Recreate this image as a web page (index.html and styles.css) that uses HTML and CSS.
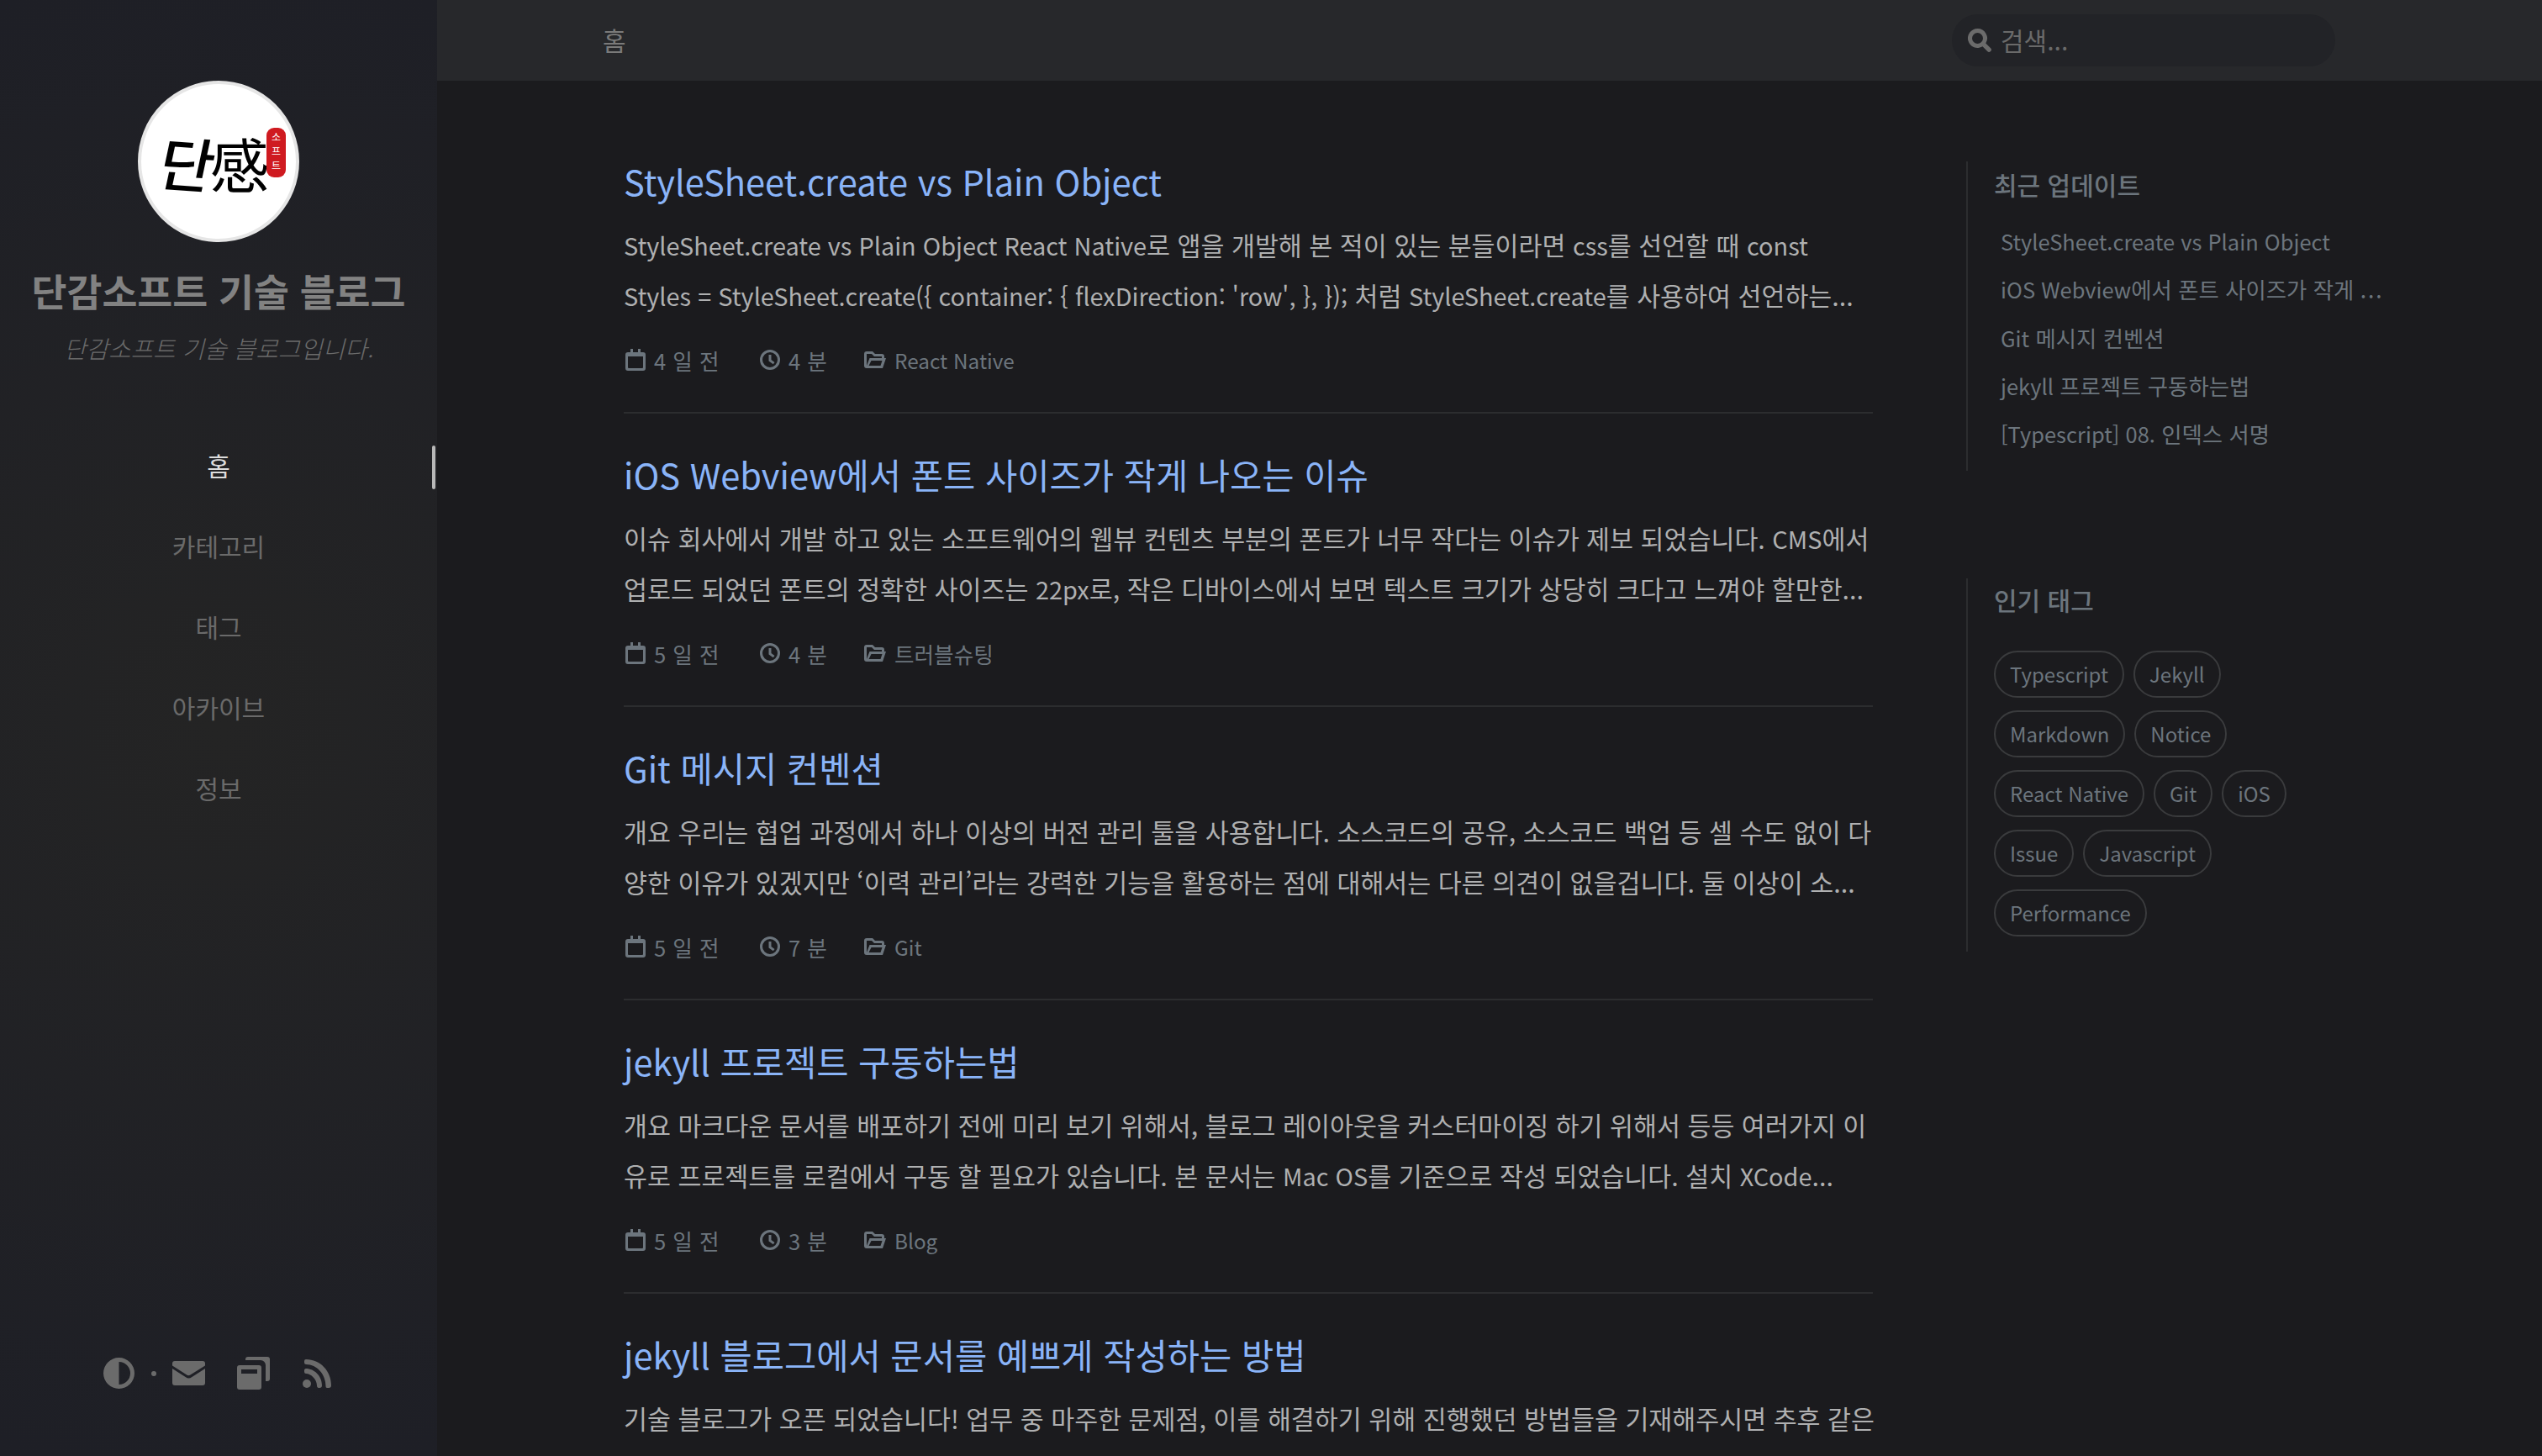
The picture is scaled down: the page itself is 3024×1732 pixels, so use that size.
FILE: index.html
```html
<!DOCTYPE html>
<html lang="ko">
<head>
    <meta charset="UTF-8">
    <title>단감소프트 기술 블로그</title>
    <link rel="stylesheet" href="styles.css">
</head>
<body>
    <aside class="sidebar">
        <div class="avatar">
            <svg class="logo" viewBox="0 0 184 184">
                <text class="logo-dan" transform="translate(17 120) rotate(4) skewX(-8)">단</text>
                <text class="logo-gam" transform="translate(82 124)">感</text>
                <rect class="logo-seal" x="149" y="52" width="23" height="59" rx="9"/>
                <text class="logo-seal-text" x="160.500" y="68">소</text>
                <text class="logo-seal-text" x="160.500" y="85">프</text>
                <text class="logo-seal-text" x="160.500" y="102">트</text>
            </svg>
        </div>
        <div class="site-title">단감소프트 기술 블로그</div>
        <div class="site-subtitle">단감소프트 기술 블로그입니다.</div>
        <nav class="nav">
            <a class="nav-item active">홈</a>
            <a class="nav-item">카테고리</a>
            <a class="nav-item">태그</a>
            <a class="nav-item">아카이브</a>
            <a class="nav-item">정보</a>
        </nav>
        <div class="sidebar-bottom">
            <svg class="side-icon icon-mode" viewBox="0 0 37 37"><path fill-rule="evenodd" d="M18.500 0a18.500 18.500 0 1 0 0 37a18.500 18.500 0 1 0 0-37zM18.500 5a13.500 13.500 0 0 1 0 27z"/></svg>
            <span class="side-dot"></span>
            <svg class="side-icon icon-mail" viewBox="0 0 39 29"><path d="M3 0h33a3 3 0 0 1 3 3v2.500L21 16.800a3.400 3.400 0 0 1-3.400 0L0 5.500V3a3 3 0 0 1 3-3z"/><path d="M0 9l16 10.300a6 6 0 0 0 7 0L39 9v17a3 3 0 0 1-3 3H3a3 3 0 0 1-3-3z"/></svg>
            <svg class="side-icon icon-books" viewBox="0 0 39 39"><path d="M13 0h23a3 3 0 0 1 3 3v23a3 3 0 0 1-3 3h-2V10a6 6 0 0 0-6-6H10V3a3 3 0 0 1 3-3z"/><path fill-rule="evenodd" d="M3 10h23a3 3 0 0 1 3 3v23a3 3 0 0 1-3 3H3a3 3 0 0 1-3-3V13a3 3 0 0 1 3-3zM5 15v5h19v-5z"/></svg>
            <svg class="side-icon icon-rss" viewBox="0 0 34 34"><circle cx="5" cy="29" r="5"/><path d="M2 12.500a2 2 0 0 1 2-1.500c10 0 19 9 19 20a3 3 0 0 1-3 3h-1c-1 0-2-1-2-2.500C17 24 10 17 4 17a2 2 0 0 1-2-2z"/><path d="M2 2a2 2 0 0 1 2-2c17 0 30 14 30 31a3 3 0 0 1-3 3h-2c-1 0-1.500-1-1.500-2C27.500 18 17 6 4 6a2 2 0 0 1-2-2z"/></svg>
        </div>
        <span class="nav-bar"></span>
    </aside>

    <div class="page">
        <header class="topbar">
            <div class="breadcrumb">홈</div>
            <div class="search">
                <svg class="search-icon" viewBox="0 0 28 28"><path d="M11.500 0a11.500 11.500 0 0 1 9.800 17.500l6 6a2.700 2.700 0 0 1-3.800 3.800l-6-6A11.500 11.500 0 1 1 11.500 0zm0 5a6.500 6.500 0 1 0 0 13a6.500 6.500 0 0 0 0-13z"/></svg>
                <span class="search-text">검색...</span>
            </div>
        </header>

        <div class="content">
            <main class="post-list">
                <article class="post">
                    <h1 class="post-title">StyleSheet.create vs Plain Object</h1>
                    <p class="post-line"><span class="lat">StyleSheet.create vs Plain Object React Native</span>로 앱을 개발해 본 적이 있는 분들이라면 <span class="lat">css</span>를 선언할 때 <span class="lat">const</span></p>
                    <p class="post-line"><span class="lat">Styles = StyleSheet.create({ container: { flexDirection: 'row', }, });</span> 처럼 <span class="lat">StyleSheet.create</span>를 사용하여 선언하는...</p>
                    <div class="post-meta">
                        <span class="meta-item meta-date"><svg class="meta-icon" viewBox="0 0 24 26"><use href="#i-cal"/></svg><span class="spaced">4 일 전</span></span>
                        <span class="meta-item meta-time"><svg class="meta-icon" viewBox="0 0 24 26"><use href="#i-clock"/></svg><span class="spaced">4 분</span></span>
                        <span class="meta-item"><svg class="meta-icon icon-wide" viewBox="0 0 26 26"><use href="#i-folder"/></svg><span class="lat">React Native</span></span>
                    </div>
                </article>
                <article class="post">
                    <h1 class="post-title">iOS Webview에서 폰트 사이즈가 작게 나오는 이슈</h1>
                    <p class="post-line">이슈 회사에서 개발 하고 있는 소프트웨어의 웹뷰 컨텐츠 부분의 폰트가 너무 작다는 이슈가 제보 되었습니다. <span class="lat">CMS</span>에서</p>
                    <p class="post-line">업로드 되었던 폰트의 정확한 사이즈는 <span class="lat">22px</span>로, 작은 디바이스에서 보면 텍스트 크기가 상당히 크다고 느껴야 할만한...</p>
                    <div class="post-meta">
                        <span class="meta-item meta-date"><svg class="meta-icon" viewBox="0 0 24 26"><use href="#i-cal"/></svg><span class="spaced">5 일 전</span></span>
                        <span class="meta-item meta-time"><svg class="meta-icon" viewBox="0 0 24 26"><use href="#i-clock"/></svg><span class="spaced">4 분</span></span>
                        <span class="meta-item"><svg class="meta-icon icon-wide" viewBox="0 0 26 26"><use href="#i-folder"/></svg>트러블슈팅</span>
                    </div>
                </article>
                <article class="post">
                    <h1 class="post-title">Git 메시지 컨벤션</h1>
                    <p class="post-line">개요 우리는 협업 과정에서 하나 이상의 버전 관리 툴을 사용합니다. 소스코드의 공유, 소스코드 백업 등 셀 수도 없이 다</p>
                    <p class="post-line">양한 이유가 있겠지만 ‘이력 관리’라는 강력한 기능을 활용하는 점에 대해서는 다른 의견이 없을겁니다. 둘 이상이 소...</p>
                    <div class="post-meta">
                        <span class="meta-item meta-date"><svg class="meta-icon" viewBox="0 0 24 26"><use href="#i-cal"/></svg><span class="spaced">5 일 전</span></span>
                        <span class="meta-item meta-time"><svg class="meta-icon" viewBox="0 0 24 26"><use href="#i-clock"/></svg><span class="spaced">7 분</span></span>
                        <span class="meta-item"><svg class="meta-icon icon-wide" viewBox="0 0 26 26"><use href="#i-folder"/></svg><span class="lat">Git</span></span>
                    </div>
                </article>
                <article class="post">
                    <h1 class="post-title">jekyll 프로젝트 구동하는법</h1>
                    <p class="post-line">개요 마크다운 문서를 배포하기 전에 미리 보기 위해서, 블로그 레이아웃을 커스터마이징 하기 위해서 등등 여러가지 이</p>
                    <p class="post-line">유로 프로젝트를 로컬에서 구동 할 필요가 있습니다. 본 문서는 <span class="lat">Mac OS</span>를 기준으로 작성 되었습니다. 설치 <span class="lat">XCode</span>...</p>
                    <div class="post-meta">
                        <span class="meta-item meta-date"><svg class="meta-icon" viewBox="0 0 24 26"><use href="#i-cal"/></svg><span class="spaced">5 일 전</span></span>
                        <span class="meta-item meta-time"><svg class="meta-icon" viewBox="0 0 24 26"><use href="#i-clock"/></svg><span class="spaced">3 분</span></span>
                        <span class="meta-item"><svg class="meta-icon icon-wide" viewBox="0 0 26 26"><use href="#i-folder"/></svg><span class="lat">Blog</span></span>
                    </div>
                </article>
                <article class="post">
                    <h1 class="post-title">jekyll 블로그에서 문서를 예쁘게 작성하는 방법</h1>
                    <p class="post-line">기술 블로그가 오픈 되었습니다! 업무 중 마주한 문제점, 이를 해결하기 위해 진행했던 방법들을 기재해주시면 추후 같은</p>
                </article>
            </main>

            <div class="panel">
                <section class="panel-box recent">
                    <h3 class="panel-title">최근 업데이트</h3>
                    <ul class="recent-list">
                        <li><span class="lat">StyleSheet.create vs Plain Object</span></li>
                        <li><span class="lat">iOS Webview</span>에서 폰트 사이즈가 작게 <span class="dots">...</span></li>
                        <li><span class="lat">Git</span> 메시지 컨벤션</li>
                        <li><span class="lat">jekyll</span> 프로젝트 구동하는법</li>
                        <li><span class="lat">[Typescript] 08.</span> 인덱스 서명</li>
                    </ul>
                </section>
                <section class="panel-box tags">
                    <h3 class="panel-title">인기 태그</h3>
                    <div class="tag-list">
                        <a class="tag">Typescript</a>
                        <a class="tag">Jekyll</a>
                        <a class="tag">Markdown</a>
                        <a class="tag">Notice</a>
                        <a class="tag">React Native</a>
                        <a class="tag">Git</a>
                        <a class="tag">iOS</a>
                        <a class="tag">Issue</a>
                        <a class="tag">Javascript</a>
                        <a class="tag">Performance</a>
                    </div>
                </section>
            </div>
        </div>
    </div>

    <svg class="icon-defs">
        <symbol id="i-cal" viewBox="0 0 24 26">
            <path d="M6 0h3v4h6V0h3v4h3a3 3 0 0 1 3 3v16a3 3 0 0 1-3 3H3a3 3 0 0 1-3-3V7a3 3 0 0 1 3-3h3zM3 9v13a1 1 0 0 0 1 1h16a1 1 0 0 0 1-1V9z" fill-rule="evenodd"/>
        </symbol>
        <symbol id="i-clock" viewBox="0 0 24 26">
            <path d="M12 1a12 12 0 1 0 0 24a12 12 0 1 0 0-24zM12 4a9 9 0 1 1 0 18a9 9 0 1 1 0-18z" fill-rule="evenodd"/>
            <path d="M10.500 7h3v6l4 3-1.700 2.300-5.300-3.800z"/>
        </symbol>
        <symbol id="i-folder" viewBox="0 0 26 26">
            <path d="M3 3h7l3 3h8a3 3 0 0 1 3 3v2h-3V9h-9l-3-3H3v14l3.500-9H26l-4 12H3a3 3 0 0 1-3-3V6a3 3 0 0 1 3-3zM8.500 14l-3 6h14l2-6z" fill-rule="evenodd"/>
        </symbol>
    </svg>
</body>
</html>
```

FILE: styles.css
```css
html, body {
    margin: 0;
    height: 100%;
    overflow: hidden;
}

body {
    display: flex;
    background: #1b1b1e;
    font-family: "Noto Sans CJK KR", "Noto Sans", sans-serif;
    color: #afb0b1;
}

/* latin runs sit a little narrower than the hangul around them */
.lat {
    font-size: 0.95em;
}

.sidebar {
    position: relative;
    width: 520px;
    flex-shrink: 0;
    display: flex;
    flex-direction: column;
    align-items: center;
    padding-top: 96px;
    box-sizing: border-box;
    background: radial-gradient(circle, #242424 0%, #1e1f26 100%);
}

.avatar {
    width: 192px;
    height: 192px;
    box-sizing: border-box;
    border: 4px solid #e6e6e6;
    border-radius: 50%;
    background: white;
    overflow: hidden;
}

.logo {
    display: block;
    width: 184px;
    height: 184px;
}

.logo-dan {
    font-size: 70px;
    font-weight: 500;
    fill: #000;
}

.logo-gam {
    font-size: 70px;
    font-weight: 400;
    fill: #000;
}

.logo-seal {
    fill: #cf1a20;
}

.logo-seal-text {
    font-size: 12px;
    fill: white;
    text-anchor: middle;
}

.site-title {
    margin-top: 22px;
    font-size: 45.600px;
    line-height: 70px;
    font-weight: 700;
    color: #828282;
    white-space: nowrap;
}

.site-subtitle {
    margin-top: 12px;
    font-size: 28.800px;
    line-height: 44px;
    font-weight: 300;
    font-style: italic;
    color: #6a6a6a;
    white-space: nowrap;
}

.nav {
    margin-top: 69px;
    display: flex;
    flex-direction: column;
    align-items: center;
}

.nav-item {
    height: 96px;
    line-height: 96px;
    font-size: 30px;
    color: #6a6a6a;
}

.nav-item.active {
    color: #dcdcdc;
}

.nav-bar {
    position: absolute;
    top: 530px;
    right: 2px;
    width: 4px;
    height: 52px;
    border-radius: 2px;
    background: #b8b8b8;
}

.sidebar-bottom {
    margin-top: auto;
    height: 39px;
    margin-bottom: 79px;
    margin-right: 4px;
    display: flex;
    align-items: center;
}

.side-icon {
    display: block;
    fill: #6b6b6b;
}

.icon-mode {
    width: 37px;
    height: 37px;
}

.side-dot {
    width: 6px;
    height: 6px;
    margin: 0 19px 0 20px;
    border-radius: 50%;
    background: #6b6b6b;
}

.icon-mail {
    width: 39px;
    height: 29px;
    margin-right: 38px;
}

.icon-books {
    width: 39px;
    height: 39px;
    margin-right: 39px;
}

.icon-rss {
    width: 34px;
    height: 34px;
}

.page {
    flex: 1;
    min-width: 0;
    height: 100%;
    overflow: hidden;
}

.topbar {
    height: 96px;
    background: #27282b;
    display: flex;
    align-items: center;
    justify-content: space-between;
    padding-left: 197px;
    padding-right: 246px;
}

.breadcrumb {
    margin-top: -3px;
    font-size: 30px;
    color: #7a7a7a;
}

.search {
    width: 456px;
    height: 62px;
    box-sizing: border-box;
    padding-left: 19px;
    border-radius: 31px;
    background: #222327;
    display: flex;
    align-items: center;
    gap: 11px;
}

.search-icon {
    width: 28px;
    height: 28px;
    fill: #6b6b6b;
}

.search-text {
    margin-top: -3px;
    font-size: 30px;
    color: #6a6a6a;
}

.content {
    display: flex;
    padding-left: 222px;
}

.post-list {
    width: 1486px;
    padding-top: 89px;
    flex-shrink: 0;
}

.post {
    height: 305px;
    margin-bottom: 42px;
    border-bottom: 2px solid #2c2d2f;
}

.post:last-child {
    height: auto;
    margin-bottom: 0;
    border-bottom: none;
}

.post-title {
    margin: 0 0 16px;
    font-size: 41.600px;
    line-height: 60px;
    font-weight: 400;
    color: #8ab4f8;
    white-space: nowrap;
}

.post-line {
    margin: 0;
    font-size: 30.400px;
    line-height: 60px;
    white-space: nowrap;
}

.post-meta {
    margin-top: 27px;
    display: flex;
    align-items: center;
    height: 40px;
    font-size: 25.600px;
    color: #6c757d;
}

.meta-item {
    display: flex;
    align-items: center;
}

.meta-date {
    width: 160px;
}

.meta-time {
    width: 126px;
}

.meta-icon {
    width: 24px;
    height: 26px;
    margin-left: 2px;
    margin-right: 10px;
    fill: #6c757d;
}

.icon-wide {
    width: 26px;
    margin-left: 0;
}

.spaced {
    letter-spacing: 0.500px;
}

.panel {
    margin-left: 111px;
    padding-top: 96px;
    width: 500px;
}

.panel-box {
    border-left: 2px solid #2c2d2f;
    padding-left: 31px;
    box-sizing: border-box;
}

.recent {
    height: 368px;
    padding-top: 4px;
}

.tags {
    margin-top: 128px;
    height: 444px;
    padding-top: 2px;
}

.panel-title {
    margin: 0;
    font-size: 30px;
    line-height: 46px;
    font-weight: 500;
    color: #6c757d;
}

.recent-list {
    margin: 16px 0 0;
    padding: 0 0 0 8px;
    list-style: none;
    width: 456px;
}

.recent-list li {
    height: 57.300px;
    line-height: 57.300px;
    font-size: 26.400px;
    color: #6c757d;
    white-space: nowrap;
}

.recent-list .lat {
    font-size: 0.965em;
}

.dots {
    letter-spacing: 2px;
}

.tag-list {
    margin-top: 38px;
    display: flex;
    flex-wrap: wrap;
    gap: 15px 11px;
    width: 400px;
}

.tag {
    height: 56px;
    box-sizing: border-box;
    padding: 0 17px;
    border: 2px solid #3a3b3d;
    border-radius: 28px;
    font-size: 24px;
    line-height: 52px;
    color: #6c757d;
}

.icon-defs {
    display: none;
}
```
